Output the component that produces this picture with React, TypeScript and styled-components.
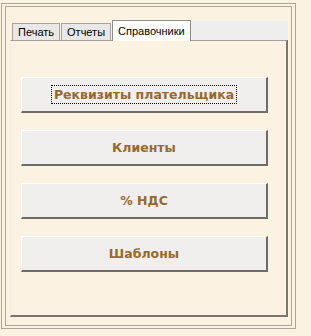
import React from "react";
import styled, {createGlobalStyle} from "styled-components";

const GlobalStyle = createGlobalStyle`
    html, body {
        margin: 0;
        padding: 0;
        background: #fcf2e2;
    }
    body {
        font-family: "Liberation Sans", Arial, sans-serif;
    }
`;

const OuterFrame = styled.div`
    margin: 3px 0 0 1px;
    width: 287px;
    height: 320px;
    border: 1px solid #aaa49b;
    padding: 2px 3px 2px 3px;
    display: flex;
`;

const InnerFrame = styled.div`
    flex: 1;
    border: 1px solid #aaa49b;
    padding: 13px 3px 8px 4px;
    display: flex;
    flex-direction: column;
`;

const TabRow = styled.div`
    display: flex;
    align-items: flex-end;
    height: 20px;
    padding-left: 2px;
`;

const Tab = styled.div<{ $active?: boolean }>`
    box-sizing: border-box;
    padding: 0 5px;
    margin-right: ${p => p.$active ? 0 : 1}px;
    display: flex;
    align-items: center;
    font-size: 11px;
    color: #000;
    background: ${p => p.$active ? '#ffffff' : '#e9e8e6'};
    border: 1px solid ${p => p.$active ? '#8f8c87' : '#a6a39e'};
    border-bottom: none;
    position: relative;
    z-index: ${p => p.$active ? 1 : 0};
    margin-bottom: ${p => p.$active ? -1 : 0}px;
    height: ${p => p.$active ? 21 : 17}px;
`;

const TabFiller = styled.div`
    flex: 1;
    height: 19px;
    background: #eeeeee;
`;

const Panel = styled.div`
    flex: 1;
    border-top: 1px solid #a39f98;
    border-left: 1px solid #f4eee4;
    border-right: 2px solid #7a756e;
    border-bottom: 2px solid #7a756e;
    padding: 36px 0 0 10px;
    display: flex;
    flex-direction: column;
    gap: 17px;
`;

const ActionButton = styled.button<{ $focused?: boolean }>`
    width: 247px;
    height: 36px;
    box-sizing: border-box;
    background: #f0efee;
    border-top: 1px solid #ffffff;
    border-left: 1px solid #ffffff;
    border-right: 2px solid #6f6b66;
    border-bottom: 2px solid #6f6b66;
    border-radius: 0;
    padding: 0;
    font-family: "DejaVu Sans", Verdana, sans-serif;
    font-weight: bold;
    font-size: 12.5px;
    color: #98692a;
    display: flex;
    align-items: center;
    justify-content: center;
    outline: none;
    span {
        padding: 1px 2px;
        outline: ${p => p.$focused ? '1px dotted #000' : 'none'};
    }
`;

const buttons = [
    'Реквизиты плательщика',
    'Клиенты',
    '% НДС',
    'Шаблоны'
];

const App = () => {
    return (
        <>
            <GlobalStyle/>
            <OuterFrame>
                <InnerFrame>
                    <TabRow>
                        <Tab>Печать</Tab>
                        <Tab>Отчеты</Tab>
                        <Tab $active>Справочники</Tab>
                        <TabFiller/>
                    </TabRow>
                    <Panel>
                        {buttons.map((label, i) => (
                            <ActionButton key={label} $focused={i === 0}>
                                <span>{label}</span>
                            </ActionButton>
                        ))}
                    </Panel>
                </InnerFrame>
            </OuterFrame>
        </>
    );
};

export default App;
